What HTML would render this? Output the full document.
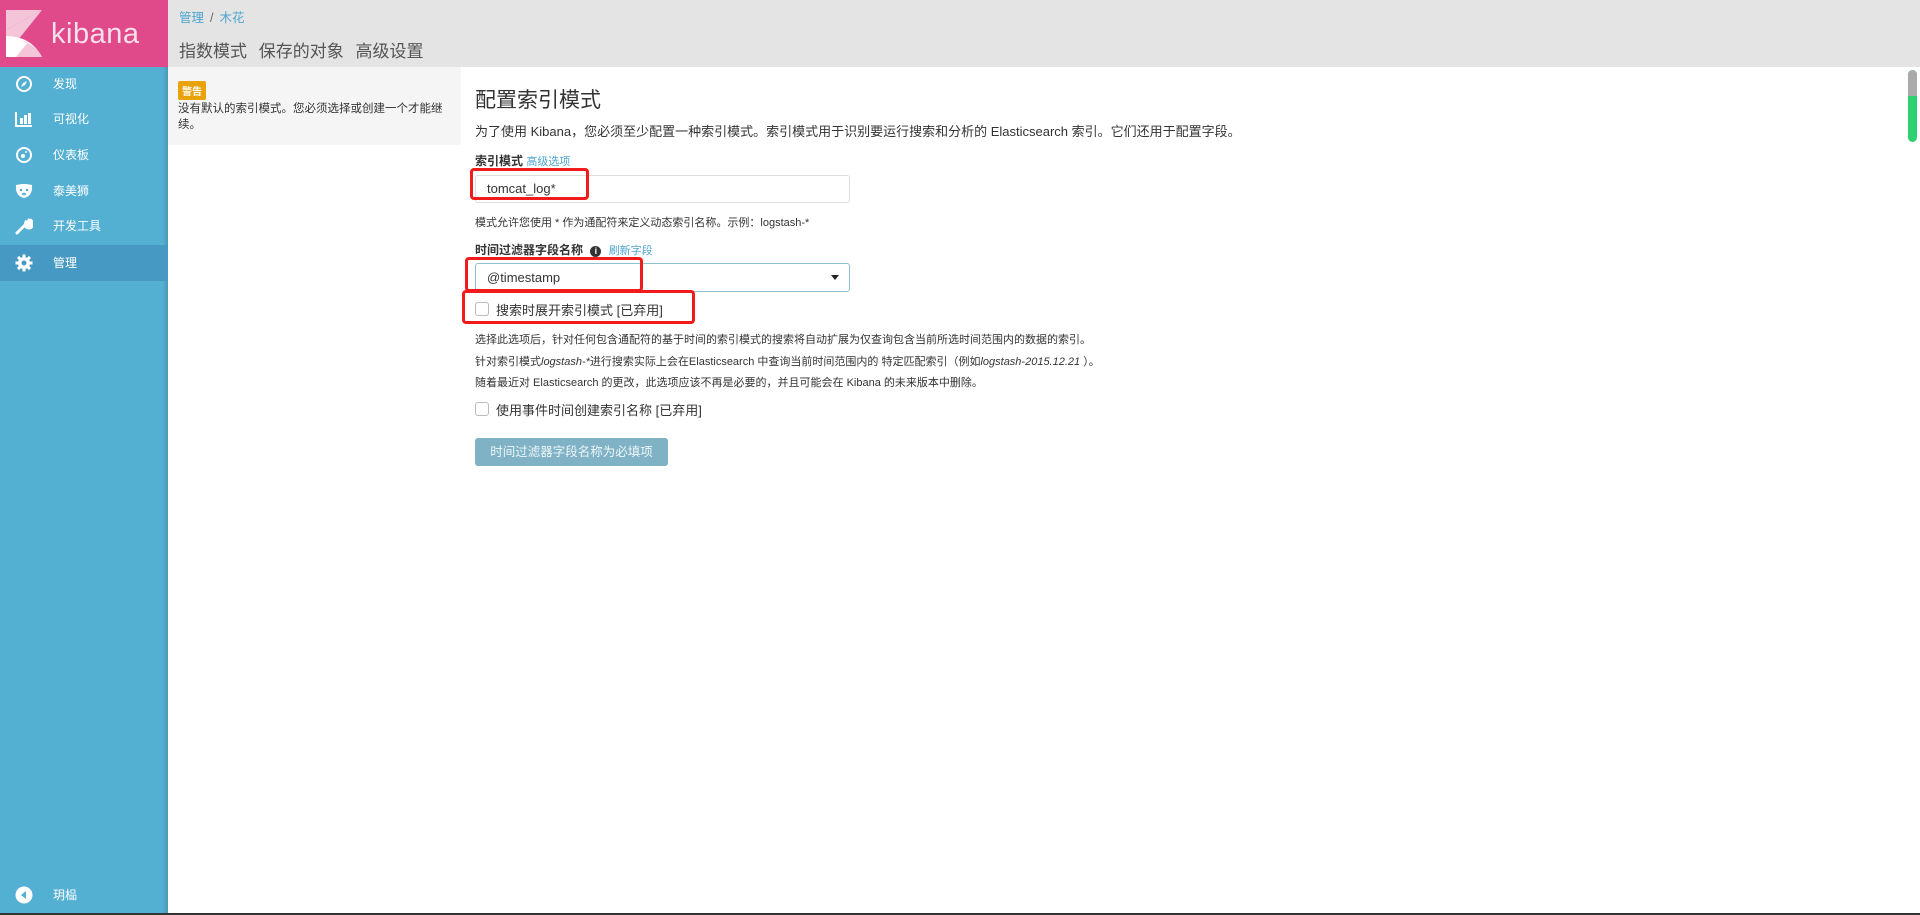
<!DOCTYPE html>
<html><head><meta charset="utf-8"><style>
*{margin:0;padding:0;box-sizing:border-box}
body{width:1920px;height:915px;overflow:hidden;background:#fff;font-family:"Liberation Sans","Noto Sans CJK SC",sans-serif;color:#333;position:relative}
.side{position:absolute;left:0;top:0;width:168px;height:915px;background:#54b0d3;box-shadow:inset -3px 0 3px rgba(0,0,0,.12)}
.logo{height:67px;background:#e0498a;position:relative}
.logo span{position:absolute;left:51px;top:18px;color:#f7e1ec;font-size:29px;letter-spacing:0.5px}
.nav{position:absolute;left:0;width:168px;height:36px;color:#fff;font-size:12px;line-height:36px}
.nav .t{position:absolute;left:53px}
.nav svg{position:absolute;left:15px;top:9px}
.act{background:#4599c2}
.hdr{position:absolute;left:168px;top:0;width:1752px;height:67px;background:#e4e4e4}
.bc{position:absolute;left:11px;top:7px;font-size:12.5px;color:#4ea6cf}
.bc i{font-style:normal;color:#666;margin:0 6px}
.tabs{position:absolute;left:11px;top:37px;font-size:17px;color:#555;word-spacing:7px}
.warn{position:absolute;left:168px;top:67px;width:293px;height:78px;background:#f5f5f5}
.badge{position:absolute;left:10px;top:14px;background:#e9a209;color:#fff;font-size:10px;font-weight:bold;padding:2px 4px;border-radius:2px}
.wt{position:absolute;left:10px;top:34px;width:270px;font-size:11.5px;line-height:16px;color:#333}
.m{position:absolute;left:475px}
.red{position:absolute;border:3px solid #f21b1b;border-radius:4px}
</style></head><body>
<div class="side">
 <div class="logo">
  <svg style="position:absolute;left:6px;top:10px" width="38" height="48" viewBox="0 0 38 48">
   <polygon points="0,0 36,0 0,20" fill="#f4c4d9"/>
   <polygon points="0,20 36,0 12,30 0,26" fill="#f4c4d9"/>
   <path d="M0,26 Q25,26 36,47 L0,47Z" fill="#fff"/>
   <path d="M12,30 Q30,34 36,47 L10,47 L22,32Z" fill="#f4c4d9"/>
   <path d="M0,26 L12,30 L10,47 L0,47Z" fill="#fff"/>
  </svg>
  <span>kibana</span>
 </div>
 <div class="nav" style="top:66px"><svg width="18" height="18" viewBox="0 0 18 18"><circle cx="9" cy="9" r="7" fill="none" stroke="#fff" stroke-width="2"/><path d="M12 6 L10 10 L6 12 L8 8Z" fill="#fff"/></svg><span class="t">发现</span></div>
 <div class="nav" style="top:101px"><svg width="18" height="18" viewBox="0 0 18 18"><path d="M1 2V16H17" fill="none" stroke="#fff" stroke-width="2"/><rect x="5" y="8" width="3" height="6" fill="#fff"/><rect x="9" y="5" width="3" height="9" fill="#fff"/><rect x="13" y="3" width="3" height="11" fill="#fff"/></svg><span class="t">可视化</span></div>
 <div class="nav" style="top:137px"><svg width="18" height="18" viewBox="0 0 18 18"><circle cx="9" cy="9" r="7" fill="none" stroke="#fff" stroke-width="2"/><circle cx="8" cy="10" r="2" fill="#fff"/><circle cx="11" cy="6" r="1" fill="#fff"/></svg><span class="t">仪表板</span></div>
 <div class="nav" style="top:173px"><svg width="18" height="18" viewBox="0 0 18 18"><path d="M1 3 Q9 1 17 3 Q18 14 9 16 Q0 14 1 3Z" fill="#fff"/><circle cx="6" cy="8" r="1.3" fill="#54b0d3"/><circle cx="12" cy="8" r="1.3" fill="#54b0d3"/><ellipse cx="9" cy="12" rx="2" ry="1.2" fill="#54b0d3"/></svg><span class="t">泰美狮</span></div>
 <div class="nav" style="top:208px"><svg width="18" height="18" viewBox="0 0 18 18"><path d="M2 16 L10 8 M10 8 A4 4 0 1 0 14 3 L13 6 L11 5Z" fill="#fff" stroke="#fff" stroke-width="3" stroke-linecap="round"/></svg><span class="t">开发工具</span></div>
 <div class="nav act" style="top:245px"><svg width="18" height="18" viewBox="0 0 18 18"><g fill="#fff"><circle cx="9" cy="9" r="6"/><rect x="7.5" y="0.5" width="3" height="17"/><rect x="0.5" y="7.5" width="17" height="3"/><rect x="7.5" y="0.5" width="3" height="17" transform="rotate(45 9 9)"/><rect x="7.5" y="0.5" width="3" height="17" transform="rotate(-45 9 9)"/></g><circle cx="9" cy="9" r="2.5" fill="#4599c2"/></svg><span class="t">管理</span></div>
 <div class="nav" style="top:877px"><svg width="18" height="18" viewBox="0 0 18 18"><circle cx="9" cy="9" r="8.5" fill="#fff"/><path d="M11 5 L6 9 L11 13Z" fill="#54b0d3"/></svg><span class="t">玥榀</span></div>
</div>
<div class="hdr">
 <div class="bc">管理<i>/</i>木花</div>
 <div class="tabs">指数模式 保存的对象 高级设置</div>
</div>
<div class="warn"><div class="badge">警告</div><div class="wt">没有默认的索引模式。您必须选择或创建一个才能继续。</div></div>

<div class="m" style="top:84px;font-size:21px;color:#333">配置索引模式</div>
<div class="m" style="top:121px;font-size:13px">为了使用 Kibana，您必须至少配置一种索引模式。索引模式用于识别要运行搜索和分析的 Elasticsearch 索引。它们还用于配置字段。</div>
<div class="m" style="top:152px;font-size:12px;font-weight:bold">索引模式 <span style="font-weight:normal;color:#4ea6cf;font-size:11px">高级选项</span></div>
<div class="m" style="top:175px;width:375px;height:28px;border:1px solid #ddd;border-radius:3px;font-size:13px;line-height:26px;padding-left:11px">tomcat_log*</div>
<div class="red" style="left:470px;top:168px;width:119px;height:32px"></div>
<div class="m" style="top:214px;font-size:11px">模式允许您使用 * 作为通配符来定义动态索引名称。示例：logstash-*</div>
<div class="m" style="top:241px;font-size:12px;font-weight:bold">时间过滤器字段名称 <span style="display:inline-block;width:11px;height:11px;border-radius:50%;background:#333;color:#fff;font-size:9px;text-align:center;line-height:11px;margin-left:4px">i</span> <span style="font-weight:normal;color:#4ea6cf;font-size:11px;margin-left:4px">刷新字段</span></div>
<div class="m" style="top:263px;width:375px;height:29px;border:1px solid #8fc0d4;border-radius:3px;font-size:13px;line-height:27px;padding-left:11px">@timestamp<span style="position:absolute;right:10px;top:11px;border-left:4px solid transparent;border-right:4px solid transparent;border-top:5px solid #222"></span></div>
<div class="red" style="left:465px;top:257px;width:178px;height:35px"></div>
<div class="m" style="top:302px;width:14px;height:14px;border:1px solid #bbb;border-radius:3px"></div>
<div class="m" style="left:496px;top:300px;font-size:13px">搜索时展开索引模式 [已弃用]</div>
<div class="red" style="left:462px;top:290px;width:233px;height:34px"></div>
<div class="m" style="top:331px;font-size:11px">选择此选项后，针对任何包含通配符的基于时间的索引模式的搜索将自动扩展为仅查询包含当前所选时间范围内的数据的索引。</div>
<div class="m" style="top:353px;font-size:11px">针对索引模式<i>logstash-*</i>进行搜索实际上会在Elasticsearch 中查询当前时间范围内的 特定匹配索引（例如<i>logstash-2015.12.21</i> ）。</div>
<div class="m" style="top:374px;font-size:11px">随着最近对 Elasticsearch 的更改，此选项应该不再是必要的，并且可能会在 Kibana 的未来版本中删除。</div>
<div class="m" style="top:402px;width:14px;height:14px;border:1px solid #bbb;border-radius:3px"></div>
<div class="m" style="left:496px;top:400px;font-size:13px">使用事件时间创建索引名称 [已弃用]</div>
<div class="m" style="top:438px;width:193px;height:28px;background:#7fb2c5;border-radius:3px;color:#eef6fa;font-size:12.5px;line-height:28px;text-align:center">时间过滤器字段名称为必填项</div>

<div style="position:absolute;left:1908px;top:70px;width:9px;height:72px;border-radius:5px;background:#2ed16f;overflow:hidden"><div style="height:26px;background:#aaa"></div></div>
<div style="position:absolute;left:0;top:913px;width:1920px;height:2px;background:#333"></div>
</body></html>
